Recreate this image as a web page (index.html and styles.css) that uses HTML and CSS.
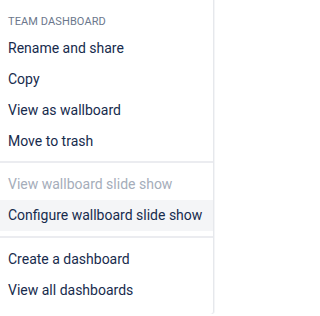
FILE: index.html
```html
<!DOCTYPE html>
<html>
<head>
<meta charset="utf-8">
<link rel="stylesheet" href="styles.css">
</head>
<body>
<div class="menu">
  <div class="group first">
    <div class="heading">TEAM DASHBOARD</div>
    <div class="item">Rename and share</div>
    <div class="item">Copy</div>
    <div class="item">View as wallboard</div>
    <div class="item">Move to trash</div>
  </div>
  <div class="group">
    <div class="item disabled">View wallboard slide show</div>
    <div class="item active">Configure wallboard slide show</div>
  </div>
  <div class="group last">
    <div class="item">Create a dashboard</div>
    <div class="item">View all dashboards</div>
  </div>
</div>
</body>
</html>
```
FILE: styles.css
```css
html, body {
  margin: 0;
  padding: 0;
  background: #ffffff;
}
body {
  font-family: Roboto, "Liberation Sans", sans-serif;
  color: #172b4d;
}
.menu {
  width: 213px;
  height: 314px;
  background: #ffffff;
  box-shadow: 1px 0 0 #e6e8ec, 2px 0 0 #f4f5f7;
  border-bottom-right-radius: 3px;
  overflow: hidden;
}
.group {
  padding: 6px 0;
  border-top: 2px solid #ebecf0;
}
.group.first {
  border-top: none;
  padding-top: 14px;
  padding-bottom: 4px;
}
.group:not(.first):not(.last) {
  padding-bottom: 5px;
}
.heading {
  font-size: 11px;
  line-height: 16px;
  color: #6b778c;
  padding: 0 8px;
  margin-bottom: 3px;
  letter-spacing: 0.1px;
}
.item {
  font-size: 14px;
  line-height: 21px;
  padding: 5px 8px;
  white-space: nowrap;
}
.item.disabled {
  color: #a5adba;
}
.item.active {
  background: #f4f5f7;
}
```
